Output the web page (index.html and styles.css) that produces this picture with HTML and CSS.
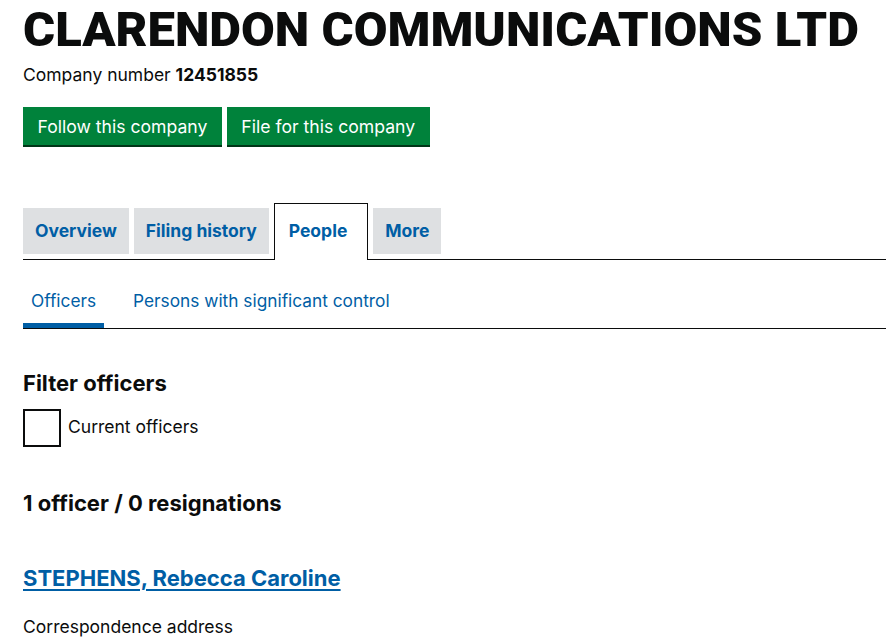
FILE: index.html
```html
<!DOCTYPE html>
<html lang="en">
<head>
    <meta charset="UTF-8">
    <title>CLARENDON COMMUNICATIONS LTD - People</title>
    <link rel="stylesheet" href="styles.css">
</head>
<body>

    <div class="company-header">
        <h1 class="heading-xlarge">CLARENDON COMMUNICATIONS LTD</h1>
        <p class="company-number">Company number <strong>12451855</strong></p>
        <div class="actions">
            <a class="button" href="#">Follow this company</a>
            <a class="button" href="#">File for this company</a>
        </div>
    </div>

    <!-- Main section tabs -->
    <ul class="section-tabs">
        <li><a class="tab" href="#">Overview</a></li>
        <li><a class="tab" href="#">Filing history</a></li>
        <li class="active"><a class="tab" href="#">People</a></li>
        <li><a class="tab" href="#">More</a></li>
    </ul>

    <ul class="sub-tabs">
        <li class="active"><a href="#">Officers</a></li>
        <li><a href="#">Persons with significant control</a></li>
    </ul>

    <h2 class="heading-medium filter-title">Filter officers</h2>
    <label class="checkbox">
        <input type="checkbox">
        <span class="box"></span>
        <span>Current officers</span>
    </label>

    <h2 class="heading-medium count">1 officer / 0 resignations</h2>

    <div class="appointment">
        <h2 class="heading-medium officer-name"><a class="officer-link" href="#">STEPHENS, Rebecca Caroline</a></h2>
        <p class="label">Correspondence address</p>
    </div>

</body>
</html>
```

FILE: styles.css
```css
body {
    margin: 0;
    padding: 0 0 0 23px;
    font-family: Inter, "Open Sans", Arial, sans-serif;
    color: #0b0c0c;
    background: #fff;
    overflow: hidden;
}
.heading-xlarge {
    font-family: Roboto, Arial, sans-serif;
    font-size: 49px;
    font-weight: 900;
    line-height: 50px;
    margin: 5px 0 0 0;
    white-space: nowrap;
}
.company-number {
    font-size: 17.5px;
    margin: 8px 0 0 0;
    line-height: 24px;
}
.company-number strong {
    font-weight: 700;
}
.actions {
    display: flex;
    gap: 5px;
    margin-top: 20px;
}
.button {
    display: inline-block;
    background-color: #00823b;
    color: #fff;
    text-decoration: none;
    font-size: 17.6px;
    padding: 0 14.5px;
    height: 38px;
    line-height: 40px;
    box-shadow: 0 2px 0 #003618;
}
.section-tabs {
    list-style: none;
    margin: 58px 0 0 0;
    padding: 0;
    display: flex;
    align-items: flex-end;
    gap: 5px;
    border-bottom: 1px solid #0b0c0c;
}
.section-tabs li {
    background-color: #dee0e2;
    margin-bottom: 5px;
}
.section-tabs .tab {
    display: block;
    padding: 0 12px;
    height: 46px;
    line-height: 46px;
    font-size: 17.5px;
    font-weight: 700;
    color: #005ea5;
    text-decoration: none;
}
.section-tabs li.active {
    background-color: #fff;
    border: 1px solid #0b0c0c;
    border-bottom: none;
    margin: 0 0 -1px 0;
    padding: 4px 8px 6px 2px;
}
.sub-tabs {
    list-style: none;
    margin: 0;
    padding: 0;
    display: flex;
    border-bottom: 1px solid #0b0c0c;
}
.sub-tabs li {
    margin-right: 21px;
}
.sub-tabs a {
    display: block;
    padding: 0 8px;
    height: 68px;
    line-height: 81px;
    font-size: 17.3px;
    color: #005ea5;
    text-decoration: none;
    box-sizing: border-box;
}
.sub-tabs li.active a {
    box-shadow: inset 0 -5px 0 #005ea5;
}
.heading-medium {
    font-size: 22px;
    font-weight: 700;
    margin: 0;
    line-height: 28px;
}
.filter-title {
    margin-top: 40px;
}
.checkbox {
    display: flex;
    align-items: center;
    margin-top: 12px;
    font-size: 17.5px;
}
.checkbox input {
    display: none;
}
.checkbox .box {
    width: 34px;
    height: 34px;
    border: 2px solid #0b0c0c;
    margin-right: 7px;
}
.checkbox .box + span {
    margin-bottom: 3px;
}
.count {
    margin-top: 42px;
}
.officer-name {
    margin-top: 47px;
}
.officer-link {
    color: #005ea5;
    text-decoration: underline;
    text-decoration-thickness: 2px;
    text-underline-offset: 3px;
}
.label {
    font-size: 17.5px;
    line-height: 24px;
    margin: 23px 0 0 0;
}
```
